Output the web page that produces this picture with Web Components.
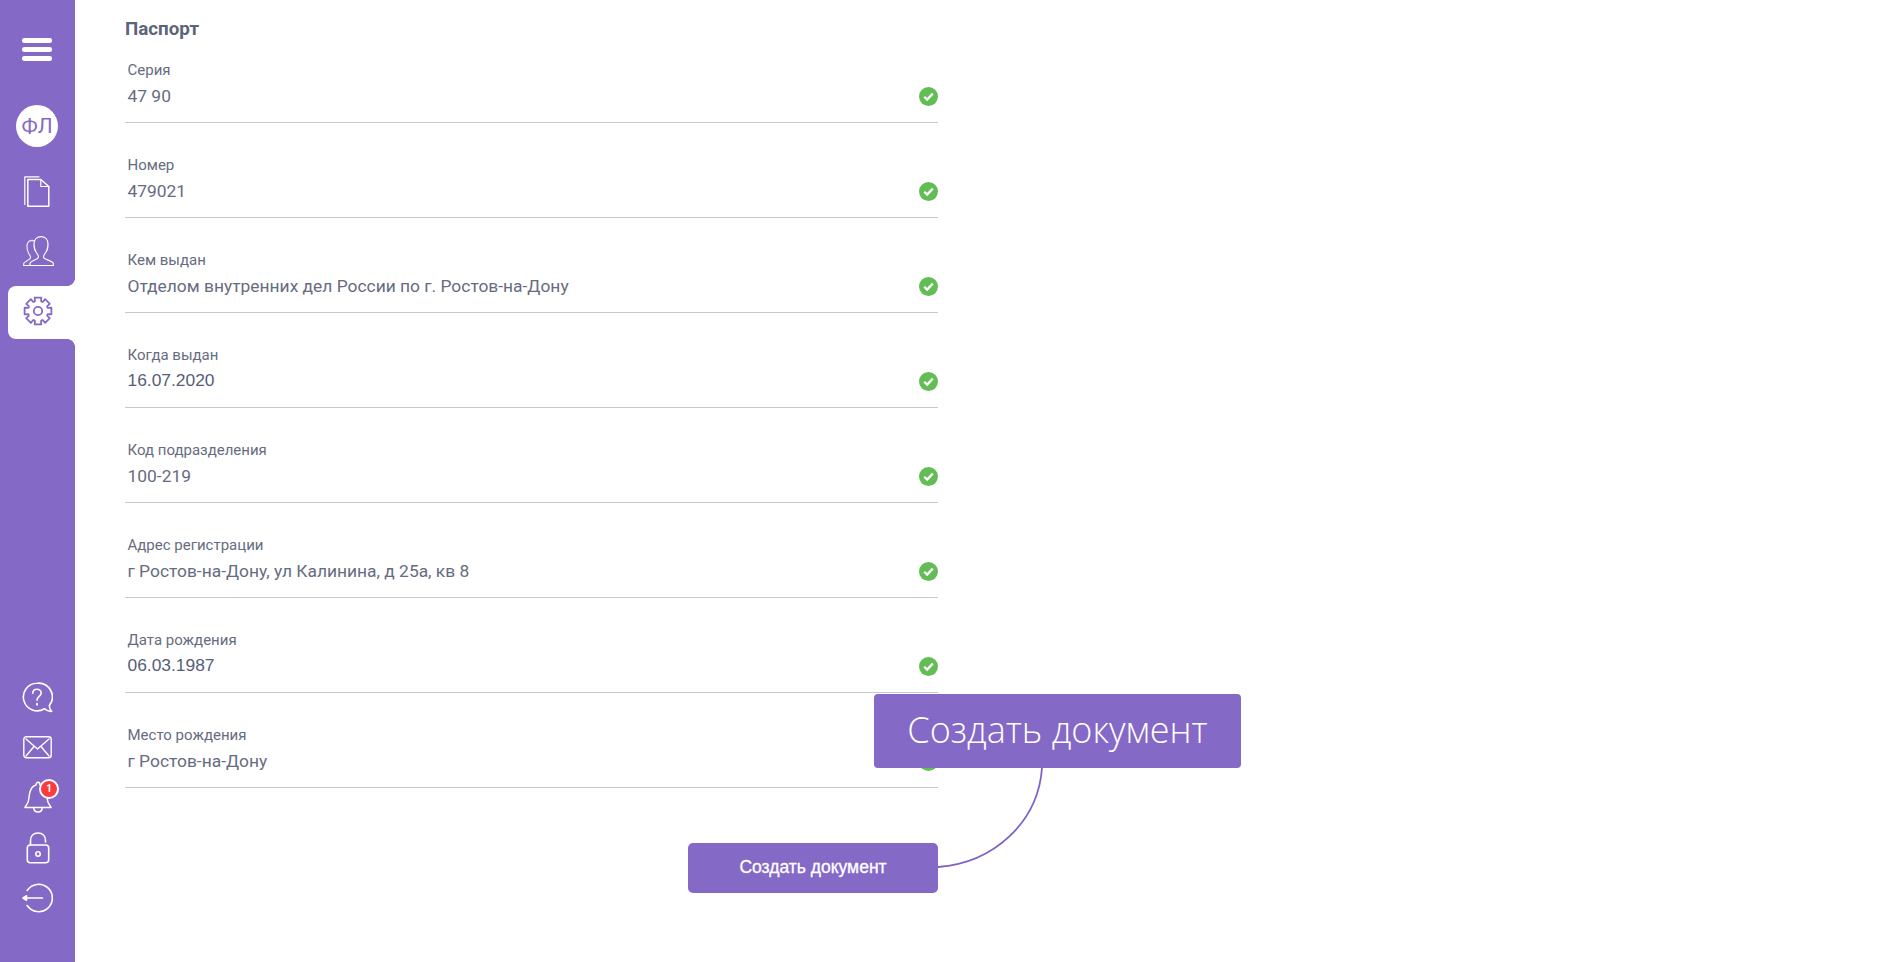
<!DOCTYPE html>
<html lang="ru"><head><meta charset="utf-8"><title>Паспорт</title>
<style>
html,body{margin:0;height:100%;background:#fff}
body{font-family:Roboto,"Noto Sans",sans-serif;color:#666c80;overflow:hidden}
</style></head><body>
<app-shell>
  <side-bar slot="side"></side-bar>
  <doc-form>
    <form-field label="Серия" value="47 90"></form-field>
    <form-field label="Номер" value="479021"></form-field>
    <form-field label="Кем выдан" value="Отделом внутренних дел России по г. Ростов-на-Дону"></form-field>
    <form-field label="Когда выдан" value="16.07.2020" date></form-field>
    <form-field label="Код подразделения" value="100-219"></form-field>
    <form-field label="Адрес регистрации" value="г Ростов-на-Дону, ул Калинина, д 25а, кв 8"></form-field>
    <form-field label="Дата рождения" value="06.03.1987" date></form-field>
    <form-field label="Место рождения" value="г Ростов-на-Дону"></form-field>
  </doc-form>
</app-shell>
<script>
const def=(n,css,html)=>{customElements.define(n,class extends HTMLElement{
  connectedCallback(){ if(this.shadowRoot)return; const r=this.attachShadow({mode:'open'});
    const h=typeof html==='function'?html(this):html; r.innerHTML=`<style>${css}</style>${h}`; }
});};
def('app-shell',`:host{display:flex;height:100vh;position:relative}`,`<slot name="side"></slot><slot></slot>`);

const S='fill="none" stroke="#fff" stroke-linecap="round" stroke-linejoin="round"';
const ICONS={
 docs:`<svg width="26" height="31" viewBox="0 0 26 31" ${S} stroke-width="1.2"><path d="M.8 28.5V.8H15"/><path d="M3.8 30.2V3.5H16.8L24.8 10.5V30.2Z" stroke-width="1.5"/><path d="M16.8 3.5V10.5H24.8" stroke-width="1.2"/></svg>`,
 users:`<svg width="31" height="31" viewBox="0 0 31 31" ${S} stroke-width="1.2"><path opacity=".85" d="M.7 29.5V27.5C.7 25.5 6.5 24.5 7.5 22 8 20.5 6.5 19 5.5 17 4.5 15 4 13 4 10.5 4 7 6 4.5 9 4.3c1 0 2 .3 2.7.8"/><path d="M7 29.5V27.5C7 25 14 24 15.3 21.5 16 20 14.5 18 13 16 11.5 14 11 11 11 8 11 3.5 14 .7 18 .7S25 3.5 25 8c0 3-.5 6-2 8-1.5 2-3 4-2.3 5.5C22 24 30.3 25 30.3 27.5V29.5Z"/><path d="M.7 29.5H8"/></svg>`,
 q:`<svg width="31" height="31" viewBox="0 0 31 31" ${S} stroke-width="1.6"><path d="M15 1.2A13.8 13.8 0 1 0 22.5 26.7C24.5 28.5 27.5 29.7 29.7 29.3 27.6 27.6 27.4 25.8 27.3 23.5A13.8 13.8 0 0 0 15 1.2Z"/><path d="M10.8 11.3C10.8 8.8 12.7 7.2 15 7.2s4.2 1.6 4.2 3.9c0 3.4-4.2 3.4-4.2 7.2"/><path d="M15 21.6v1.2" stroke-width="1.9"/></svg>`,
 mail:`<svg width="29" height="23" viewBox="0 0 29 23" ${S} stroke-width="1.4"><rect x=".8" y=".8" width="27.4" height="21" rx="2.5"/><path d="M3 3 14.5 13 26 3"/><path d="M3 20 11 10.5M26 20 18 10.5"/></svg>`,
 bell:`<svg width="28" height="32" viewBox="0 0 28 32" ${S} stroke-width="1.5"><path d="M1 26.5C1.5 24.5 4.5 24 5 16.5 5.4 9.5 8 5 12 4 12 2.5 13 1.3 14 1.3S16 2.5 16 4C20 5 22.6 9.5 23 16.5 23.5 24 26.5 24.5 27 26.5Z"/><path d="M9.8 26.5C9.8 29.5 11.8 31 14 31S18.2 29.5 18.2 26.5"/></svg>`,
 lock:`<svg width="24" height="32" viewBox="0 0 24 32" ${S} stroke-width="1.6"><path d="M4.5 13V8.7C4.5 4 7.5 1 12 1S19.5 4 19.5 8.7V10"/><rect x="1.3" y="13" width="21.4" height="17.8" rx="3"/><circle cx="12" cy="22" r="2.2"/></svg>`,
 exit:`<svg width="31" height="30" viewBox="0 0 31 30" ${S} stroke-width="1.6"><path d="M5.2 7.5A13.7 13.7 0 1 1 5.2 22.5"/><path d="M4 15H20.5"/><path d="M1 15 4.5 12.8V17.2Z" fill="#fff"/></svg>`,
 gear:(()=>{const cx=15,cy=15;const n=8;let d='';for(let i=0;i<n;i++){const a=i*2*Math.PI/n-Math.PI/2,w=.24,w2=.3;
   const p=(r,b)=>`${(cx+r*Math.cos(b)).toFixed(2)} ${(cy+r*Math.sin(b)).toFixed(2)}`;
   d+=(i?'L':'M')+p(10.4,a-w2)+'L'+p(13.8,a-w)+'L'+p(13.8,a+w)+'L'+p(10.4,a+w2)+'Q'+p(9.6,a+Math.PI/n)+' '+p(10.4,a+2*Math.PI/n-w2);}
   return `<svg width="30" height="30" viewBox="0 0 30 30" fill="none" stroke="#8569c7" stroke-width="1.8" stroke-linejoin="round"><path d="${d}Z"/><circle cx="15" cy="15" r="4.2"/></svg>`;})()
};
def('nav-icon',`:host{display:flex;align-items:center;justify-content:center;position:relative;width:75px}
  .badge{position:absolute;left:39px;top:-2px;width:16px;height:16px;border:2px solid #fff;border-radius:50%;background:#f93c3c;color:#fff;font:700 10px/16px Roboto,sans-serif;text-align:center}`,
  el=>ICONS[el.getAttribute('name')]+(el.hasAttribute('badge')?`<span class="badge">${el.getAttribute('badge')}</span>`:''));

def('side-bar',`:host{display:flex;flex-direction:column;width:75px;flex:none;height:100vh;background:#8569c7;box-sizing:border-box;padding-top:38px}
  .burger{display:flex;flex-direction:column;gap:4.5px;margin:0 0 0 22px;width:30px}
  .burger i{display:block;height:4.5px;border-radius:2.25px;background:#fff}
  .avatar{width:42px;height:42px;margin:44px 0 0 16px;border-radius:50%;background:#fff;color:#8569c7;font:400 21px/42px Roboto,sans-serif;text-align:center}
  nav-icon{height:31px}
  .active{margin:19px 0 0 8px;width:67px;height:53px;background:#fff;border-radius:8px 0 0 8px;position:relative;display:flex;align-items:center}
  .active nav-icon{width:59px;height:30px;margin:0 0 3px 0}
  .active::before,.active::after{content:"";position:absolute;right:0;width:8px;height:8px}
  .active::before{top:-8px;background:radial-gradient(circle at 0 0,#8569c7 7.6px,#fff 8.2px)}
  .active::after{bottom:-8px;background:radial-gradient(circle at 0 100%,#8569c7 7.6px,#fff 8.2px)}
  .spacer{flex:1}`,
  `<div class="burger"><i></i><i></i><i></i></div>
   <div class="avatar">ФЛ</div>
   <nav-icon name="docs" style="margin-top:29px;padding-right:2px;width:73px"></nav-icon>
   <nav-icon name="users" style="margin-top:29px;padding-left:1px;width:74px"></nav-icon>
   <div class="active"><nav-icon name="gear"></nav-icon></div>
   <div class="spacer"></div>
   <nav-icon name="q" style="margin-bottom:23px;width:74px"></nav-icon>
   <nav-icon name="mail" style="margin-bottom:22px;height:23px"></nav-icon>
   <nav-icon name="bell" badge="1" style="height:32px;margin-bottom:19px"></nav-icon>
   <nav-icon name="lock" style="height:32px;margin-bottom:19px"></nav-icon>
   <nav-icon name="exit" style="height:30px;margin-bottom:49px"></nav-icon>`);

def('form-field',`:host{display:block;height:82px;margin-bottom:13px;box-sizing:border-box;border-bottom:1px solid #c8c9d0;position:relative;padding:21px 0 0 2.5px;color:#666c80}
  .l{font:400 15px/16px Roboto,sans-serif;height:16px}
  .v{font:400 17.4px/20px Roboto,sans-serif;margin-top:8px}
  :host([date]) .v{font-family:"Liberation Sans",sans-serif;margin-top:7px;color:#566076}
  svg{position:absolute;right:0;top:46px}`,
  el=>`<div class="l">${el.getAttribute('label')}</div><div class="v">${el.getAttribute('value')}</div>
  <svg width="19" height="19" viewBox="0 0 20 20"><circle cx="10" cy="10" r="10" fill="#62bd55"/><path d="M5.5 10.3 8.6 13.3 14.5 7" fill="none" stroke="#fff" stroke-width="2.4"/></svg>`);

def('doc-form',`:host{display:block;flex:none;width:813px;margin-left:50px;position:relative}
  h1{font:700 18.8px/22px Roboto,sans-serif;margin:0;padding-top:18px;height:23px;color:#5c6479}
  .actions{display:flex;justify-content:flex-end;margin-top:55px}
  button{width:250px;height:50px;border:0;border-radius:5px;background:#8569c7;color:#fff;font:400 17.5px/48px "Liberation Sans",Arial,sans-serif;padding:0 0 2px;-webkit-text-stroke:.3px #fff}
  .callout{position:absolute;left:749px;top:694px;width:367px;height:74px;border-radius:4px;background:#8569c7;color:#fff;font:300 36px/72px "Open Sans",sans-serif;text-align:center}
  .curve{position:absolute;left:813px;top:768px;overflow:visible}`,
  `<h1>Паспорт</h1><slot></slot>
   <div class="actions"><button>Создать документ</button></div>
   <svg class="curve" width="105" height="100" viewBox="0 0 105 100"><path d="M0 99C55 95 100 55 104 0" fill="none" stroke="#7f62c4" stroke-width="1.8"/></svg>
   <div class="callout">Создать документ</div>`);
</script>
</body></html>
